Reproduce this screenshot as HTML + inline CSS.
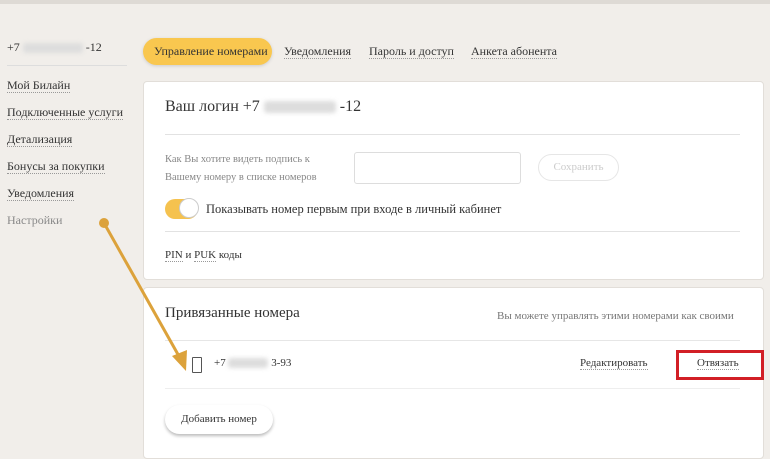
<!DOCTYPE html>
<html><head><meta charset="utf-8"><style>
body{margin:0;width:770px;height:450px;background:#f1eeea;font-family:"Liberation Serif",serif;color:#333;position:relative;overflow:hidden}
.a{position:absolute;white-space:nowrap}
.u{border-bottom:1px dotted #999}
.card{position:absolute;background:#fff;border:1px solid #e2ded9;border-radius:4px}
.blur{display:inline-block;background:#ddd;filter:blur(2px);height:10px;vertical-align:middle;border-radius:3px}
</style></head><body>
<div class="a" style="left:0;top:0;width:770px;height:4px;background:#dedad5"></div>
<div class="a" style="left:7px;top:40px;font-size:12px">+7 <span class="blur" style="width:60px"></span> -12</div>
<div class="a" style="left:7px;top:65px;width:120px;height:1px;background:#ddd"></div>
<div class="a" style="left:7px;top:78px;font-size:12px"><span class="u">Мой Билайн</span></div>
<div class="a" style="left:7px;top:105px;font-size:12px"><span class="u">Подключенные услуги</span></div>
<div class="a" style="left:7px;top:132px;font-size:12px"><span class="u">Детализация</span></div>
<div class="a" style="left:7px;top:159px;font-size:12px"><span class="u">Бонусы за покупки</span></div>
<div class="a" style="left:7px;top:186px;font-size:12px"><span class="u">Уведомления</span></div>
<div class="a" style="left:7px;top:213px;font-size:12px;color:#888">Настройки</div>
<div class="a" style="left:143px;top:38px;width:129px;height:27px;background:#f9c74f;border-radius:14px;box-shadow:0 1px 3px #ccc"></div>
<div class="a" style="left:154px;top:44px;font-size:12px">Управление номерами</div>
<div class="a" style="left:284px;top:44px;font-size:12px"><span class="u">Уведомления</span></div>
<div class="a" style="left:369px;top:44px;font-size:12px"><span class="u">Пароль и доступ</span></div>
<div class="a" style="left:471px;top:44px;font-size:12px"><span class="u">Анкета абонента</span></div>
<div class="card" style="left:143px;top:81px;width:619px;height:197px"></div>
<div class="a" style="left:165px;top:98px;font-size:16px">Ваш логин +7 <span class="blur" style="width:72px;height:12px"></span> -12</div>
<div class="a" style="left:165px;top:134px;width:575px;height:1px;background:#e2e2e2"></div>
<div class="a" style="left:165px;top:151px;font-size:10.5px;color:#888;line-height:18px">Как Вы хотите видеть подпись к<br>Вашему номеру в списке номеров</div>
<div class="a" style="left:354px;top:152px;width:167px;height:32px;border:1px solid #ddd;border-radius:3px;box-sizing:border-box"></div>
<div class="a" style="left:538px;top:154px;width:81px;height:27px;border:1px solid #e6e6e6;border-radius:14px;box-sizing:border-box;text-align:center;line-height:25px;font-size:11px;color:#ccc">Сохранить</div>
<div class="a" style="left:165px;top:199px;width:33px;height:20px;background:#f5c24f;border-radius:10px"></div>
<div class="a" style="left:179px;top:198px;width:20px;height:20px;background:#fff;border:1px solid #ccc;border-radius:50%;box-sizing:border-box"></div>
<div class="a" style="left:206px;top:202px;font-size:12.5px">Показывать номер первым при входе в личный кабинет</div>
<div class="a" style="left:165px;top:231px;width:575px;height:1px;background:#e2e2e2"></div>
<div class="a" style="left:165px;top:249px;font-size:11px"><span class="u">PIN</span> и <span class="u">PUK</span> коды</div>
<div class="card" style="left:143px;top:287px;width:619px;height:170px"></div>
<div class="a" style="left:165px;top:305px;font-size:15px">Привязанные номера</div>
<div class="a" style="left:497px;top:310px;font-size:11px;color:#777">Вы можете управлять этими номерами как своими</div>
<div class="a" style="left:165px;top:340px;width:575px;height:1px;background:#e6e6e6"></div>
<div class="a" style="left:192px;top:357px;width:8px;height:14px;border:1px solid #555;border-radius:1px"></div>
<div class="a" style="left:214px;top:357px;font-size:11px">+7 <span class="blur" style="width:40px"></span> 3-93</div>
<div class="a" style="left:580px;top:357px;font-size:11px"><span class="u">Редактировать</span></div>
<div class="a" style="left:676px;top:350px;width:88px;height:30px;border:3px solid #d21f26;box-sizing:border-box"></div>
<div class="a" style="left:697px;top:357px;font-size:11px"><span class="u">Отвязать</span></div>
<div class="a" style="left:165px;top:388px;width:575px;height:1px;background:#eee"></div>
<div class="a" style="left:165px;top:405px;width:108px;height:29px;background:#fff;border-radius:15px;box-shadow:0 2px 3px #bbb;text-align:center;line-height:29px;font-size:11px">Добавить номер</div>
<svg class="a" style="left:0;top:0" width="770" height="450"><circle cx="104" cy="223" r="5" fill="#dca23b"/><line x1="104" y1="223" x2="180" y2="358" stroke="#dca23b" stroke-width="3"/><polygon points="186,371 172,356 187,350" fill="#dca23b"/></svg>
</body></html>
